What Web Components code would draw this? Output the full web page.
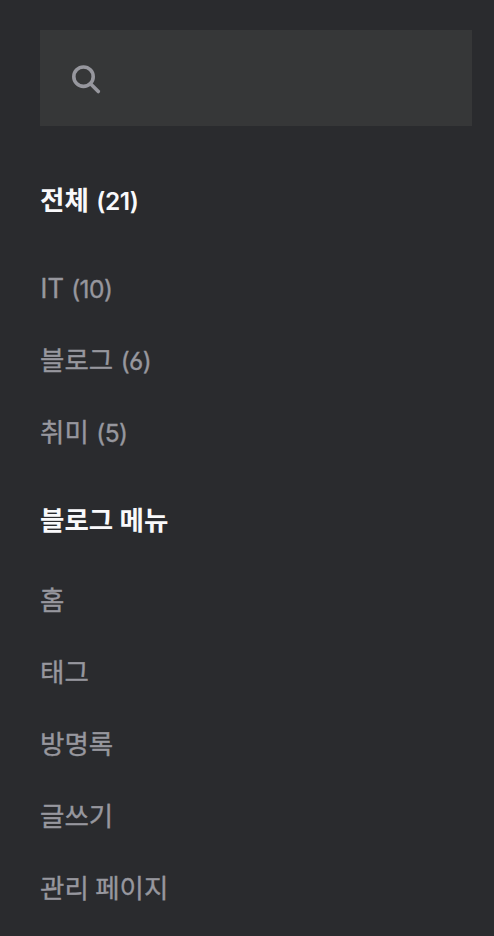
<!DOCTYPE html>
<html lang="ko">
<head>
<meta charset="UTF-8">
<title>블로그 메뉴</title>
<style>
    body {
        margin: 0;
        background: #2a2b2e;
        font-family: "Noto Sans CJK KR", sans-serif;
    }
</style>
</head>
<body>
<blog-sidebar>
    <search-box></search-box>
    <menu-group>
        <menu-item slot="title" bold count="21">전체</menu-item>
        <menu-item count="10">IT</menu-item>
        <menu-item count="6">블로그</menu-item>
        <menu-item count="5">취미</menu-item>
    </menu-group>
    <menu-group compact>
        <menu-item slot="title" bold>블로그 메뉴</menu-item>
        <menu-item>홈</menu-item>
        <menu-item>태그</menu-item>
        <menu-item>방명록</menu-item>
        <menu-item>글쓰기</menu-item>
        <menu-item>관리 페이지</menu-item>
    </menu-group>
</blog-sidebar>
<script>
class BlogSidebar extends HTMLElement {
    constructor() {
        super();
        this.attachShadow({ mode: 'open' });
    }

    connectedCallback() {
        this.shadowRoot.innerHTML = `
            <style>
                :host {
                    display: block;
                    box-sizing: border-box;
                    height: 936px;
                    padding: 30px 22px 0 40px;
                    overflow: hidden;
                }
            </style>
            <slot></slot>
        `;
    }
}

class SearchBox extends HTMLElement {
    constructor() {
        super();
        this.attachShadow({ mode: 'open' });
    }

    connectedCallback() {
        this.shadowRoot.innerHTML = `
            <style>
                :host {
                    display: flex;
                    align-items: center;
                    box-sizing: border-box;
                    height: 96px;
                    padding: 4px 0 0 30px;
                    margin-bottom: 37px;
                    background: #363738;
                }
                svg {
                    display: block;
                    fill: none;
                    stroke: #97979e;
                    stroke-width: 3.6;
                    stroke-linecap: round;
                }
            </style>
            <svg width="32" height="32" viewBox="0 0 32 32">
                <circle cx="13.5" cy="12.7" r="9.7"/>
                <path d="M20.5 19.7 28.3 27.5"/>
            </svg>
        `;
    }
}

class MenuGroup extends HTMLElement {
    constructor() {
        super();
        this.attachShadow({ mode: 'open' });
    }

    connectedCallback() {
        this.shadowRoot.innerHTML = `
            <style>
                :host {
                    display: block;
                }
                .title {
                    margin-bottom: 16px;
                }
                :host([compact]) .title {
                    margin-bottom: 8px;
                }
                .items {
                    margin-bottom: 16px;
                }
            </style>
            <div class="title"><slot name="title"></slot></div>
            <div class="items"><slot></slot></div>
        `;
    }
}

class MenuItem extends HTMLElement {
    constructor() {
        super();
        this.attachShadow({ mode: 'open' });
    }

    connectedCallback() {
        const count = this.getAttribute('count');
        this.shadowRoot.innerHTML = `
            <style>
                :host {
                    display: flex;
                    align-items: baseline;
                    height: 72px;
                    line-height: 72px;
                    font-size: 26.5px;
                    font-weight: 400;
                    word-spacing: -1px;
                    color: #97979e;
                    -webkit-text-stroke: 0.35px currentColor;
                }
                :host([bold]) {
                    font-weight: 700;
                    color: #f9f9fb;
                    -webkit-text-stroke: 0;
                }
                .count {
                    margin-left: 7.5px;
                    font-family: Inter, sans-serif;
                    font-size: 24.5px;
                    font-weight: 400;
                    letter-spacing: -0.5px;
                    font-feature-settings: "ss01", "cv05", "cv06", "case" 0, "calt" 0;
                }
                :host([bold]) .count {
                    font-weight: 600;
                }
            </style>
            <span class="label"><slot></slot></span>
            ${count ? `<span class="count">(${count})</span>` : ''}
        `;
    }
}

customElements.define('blog-sidebar', BlogSidebar);
customElements.define('search-box', SearchBox);
customElements.define('menu-group', MenuGroup);
customElements.define('menu-item', MenuItem);
</script>
</body>
</html>
